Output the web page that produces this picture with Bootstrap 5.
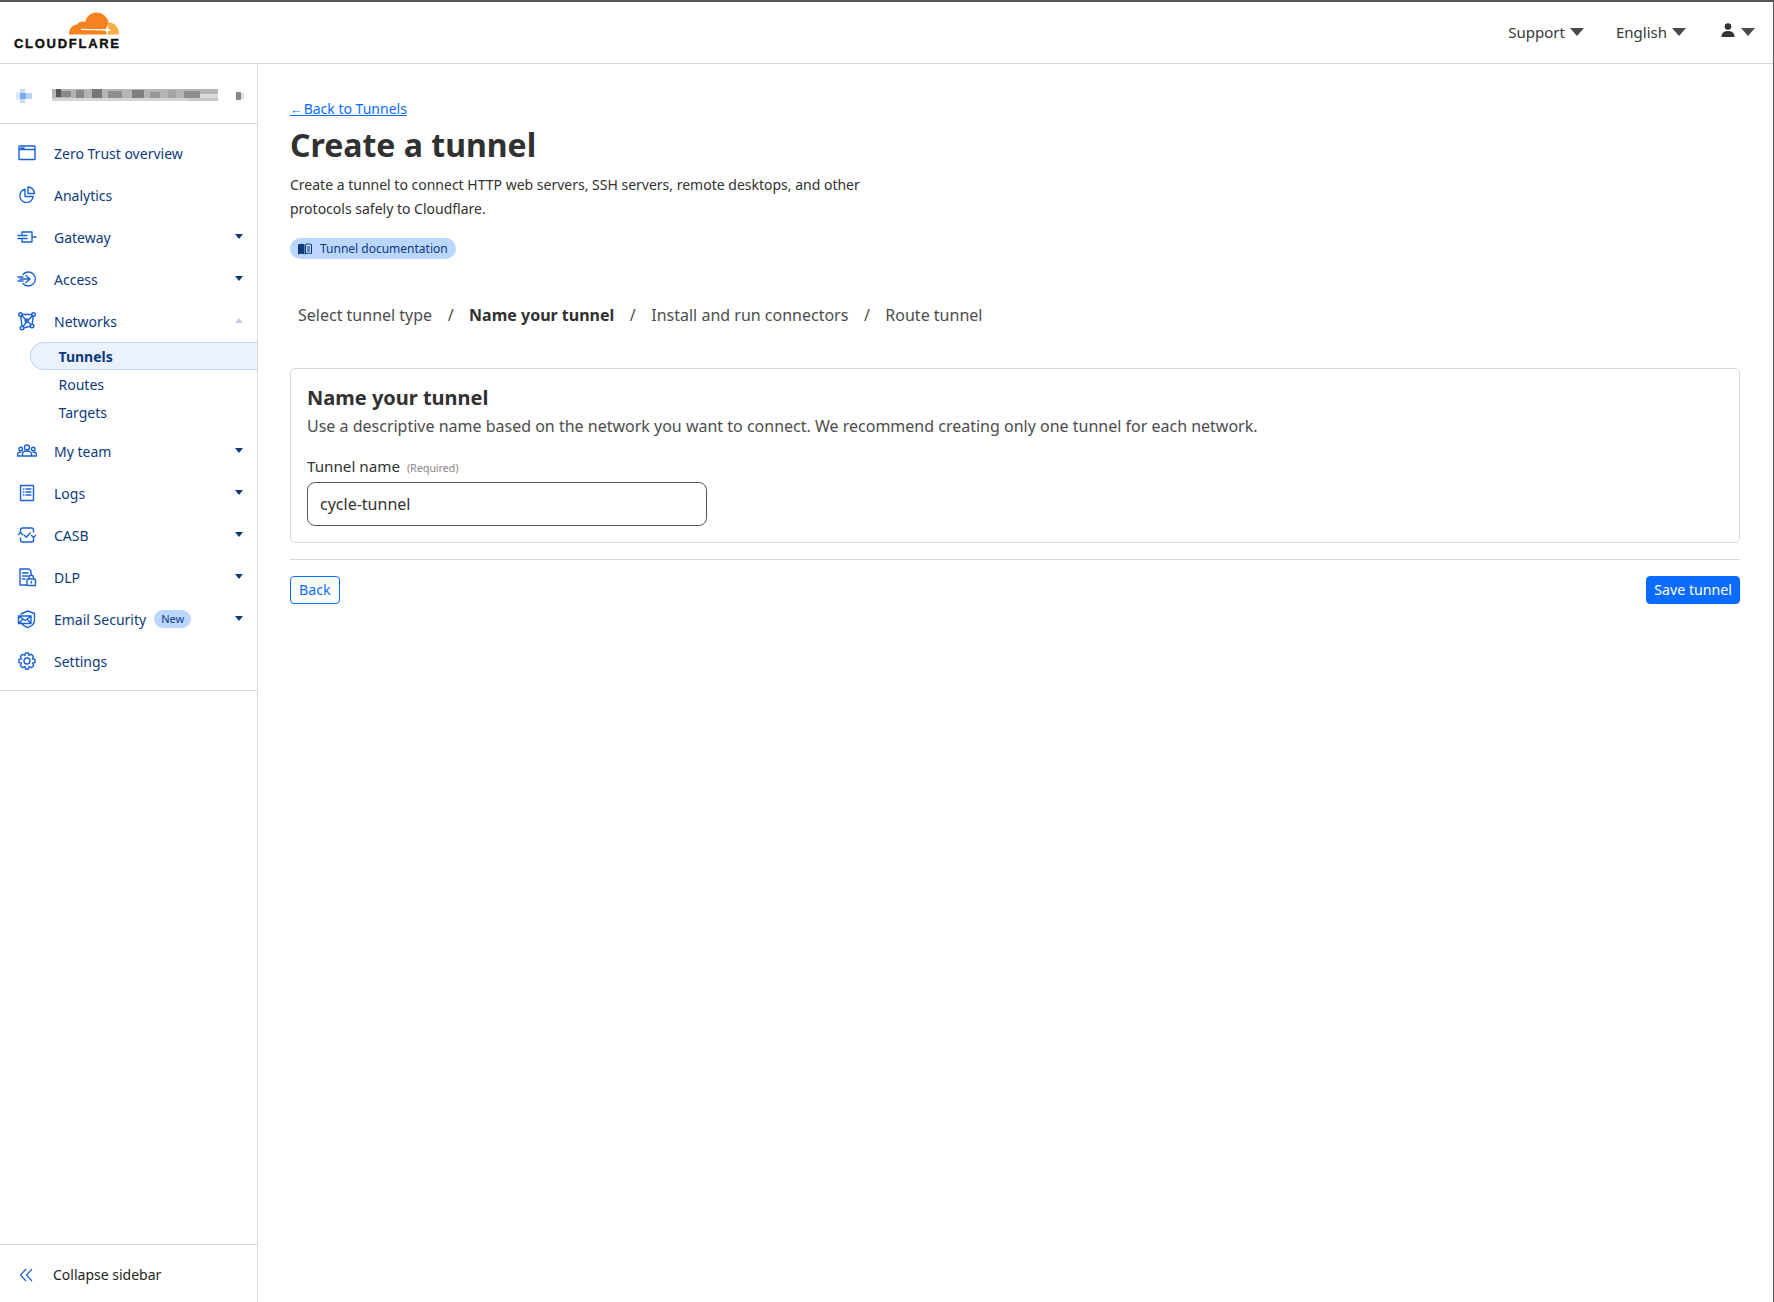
<!doctype html>
<html lang="en">

<head>
    <meta charset="utf-8">
    <meta name="viewport" content="width=device-width, initial-scale=1">
    <title>Create a tunnel</title>
    <link href="https://cdn.jsdelivr.net/npm/bootstrap@5.3.0/dist/css/bootstrap.min.css" rel="stylesheet">
    <style>
        html, body { height: 100%; }
        body {
            font-family: "Noto Sans", sans-serif;
            color: #313131;
            font-size: 16px;
            overflow: hidden;
        }

        .frame {
            height: 1302px;
            border-top: 2px solid #555;
            border-right: 1px solid #555;
        }

        .top-bar { height: 62px; border-bottom: 1px solid #d9d9d9; }
        .logo { margin-left: 14px; margin-top: -4px; }
        .logo text { font-family: "Liberation Sans", sans-serif; font-weight: 700; font-size: 13px; fill: #111; stroke: #111; stroke-width: 0.4; }

        .top-menu { font-size: 15px; color: #36393a; padding-right: 18px; gap: 32px; }
        .top-menu span.item { display: flex; align-items: center; gap: 5px; }
        .top-menu svg { margin-top: -5px; margin-left: 3px; margin-right: 1px; }
        .caret-lg { width: 0; height: 0; border-left: 7px solid transparent; border-right: 7px solid transparent; border-top: 8px solid #4a4a4a; display: inline-block; margin-top: -2px; }

        .sidebar { width: 258px; flex: 0 0 258px; border-right: 1px solid #d9d9d9; color: #0e3a7c; font-size: 14px; }
        .account { height: 60px; border-bottom: 1px solid #d9d9d9; padding: 4px 12px 0 16px; }
        .nav-group { padding-top: 8px; padding-bottom: 8px; border-bottom: 1px solid #d9d9d9; }
        .side-item { height: 42px; padding: 0 14px 0 17px; }
        .side-item svg.ico { width: 20px; height: 20px; flex: none; margin-right: 17px; fill: none; stroke: #1a62d6; stroke-width: 1.4; stroke-linecap: round; stroke-linejoin: round; }
        .caret { margin-left: auto; width: 0; height: 0; border-left: 4.5px solid transparent; border-right: 4.5px solid transparent; border-top: 5px solid #0e3a7c; margin-top: -2px; }
        .caret.up { border-top: 0; border-bottom: 5px solid #c4cfdd; }
        .new-badge { background: #bbd6ff; border-radius: 10px; font-size: 11px; line-height: 18px; padding: 0 7px; margin-left: 8px; }
        .sub-items { margin-bottom: 4px; }
        .sub-item { height: 28px; padding-left: 27.5px; margin-left: 30px; line-height: 27px; border: 1px solid transparent; border-right: 0; }
        .sub-item.active { background: #eaf2fe; border-color: #bbd6ff; border-radius: 14px 0 0 14px; font-weight: 700; }
        .collapse-row { height: 58px; border-top: 1px solid #d9d9d9; color: #1d1f20; padding-left: 19px; padding-top: 2px; }
        .collapse-row svg { margin-right: 20px; }

        .content { padding: 33px 33px 0 32px; }
        .back-link { font-size: 14px; color: #0a6cff; line-height: 24px; height: 24px; display: block; }
        .back-link span { font-size: 12.5px; line-height: 1; letter-spacing: -2.5px; }
        h1.page-title { font-size: 32px; font-weight: 700; line-height: 40px; margin: 4px 0 8px; color: #313131; }
        .intro { font-size: 14px; line-height: 24px; width: 600px; margin-bottom: 17px; }
        .doc-pill { background: #bbd6ff; color: #0e3a7c; font-size: 12px; line-height: 20px; height: 21px; border-radius: 11px; padding: 0 8px; width: 166px; gap: 8px; white-space: nowrap; }
        .doc-pill svg { flex: none; }
        .steps { padding-left: 8px; margin-top: 44px; font-size: 16px; line-height: 24px; color: #4d4d4d; gap: 15.5px; }
        .steps b { color: #313131; }
        .tunnel-card { margin-top: 41px; border: 1px solid #d9d9d9; border-radius: 5px; height: 175px; padding: 15px 16px 16px; }
        .tunnel-card h2 { font-size: 20px; font-weight: 700; line-height: 28px; margin: 0 0 2px; color: #313131; }
        .tunnel-card p { margin: 0; line-height: 24px; color: #4d4d4d; font-size: 16px; }
        .field-label { font-size: 15.2px; margin: 16px 0 2px; line-height: 24px; display: block; }
        .field-label small { font-size: 11px; color: #8a8a8a; margin-left: 3px; letter-spacing: -0.2px; }
        .name-input.form-control { width: 400px; height: 44px; border: 1px solid #555; border-radius: 8px; font-size: 16px; padding: 0 12px; color: #313131; }
        .rule { margin: 16px 0; border-top: 1px solid #d9d9d9; opacity: 1; }
        .act-btn.btn { height: 28px; font-size: 14.2px; padding: 0 7px; border-radius: 4px; line-height: 26px; }
        .btn-back.btn { color: #0a6cff; border: 1px solid #0a6cff; background: #fff; padding: 0 8px; }
        .btn-save.btn { color: #fff; background: #0a6cff; border: 1px solid #0a6cff; }
    </style>
</head>

<body>
    <div class="frame d-flex flex-column">
        <div class="top-bar d-flex justify-content-between align-items-center flex-none">
            <svg class="logo" width="108" height="40" viewBox="14 10 108 40">
                <g transform="translate(0 -1)">
                    <path fill="#f6821f" d="M69 34.500C69 29 72 25 77 24.500C79 21.800 82 21 85 22C87 16 91 12.500 96 12.500C103 12.500 107.500 17 108.500 22.500L106.500 34.500Z"/>
                    <path fill="#fbad41" d="M108.500 22.500C114.500 22.500 119 27 119 34.500H107Z"/>
                    <path fill="none" stroke="#fff" stroke-width="1.2" d="M81 29.300L105 29.800"/>
                    <path fill="#fff" d="M101 30L106 29L107.500 24.500L108.500 29L112 30.500L108.300 31L107 35L106 31Z"/>
                </g>
                <text x="14" y="47" textLength="105" lengthAdjust="spacing">CLOUDFLARE</text>
            </svg>
            <div class="top-menu d-flex align-items-center">
                <span class="item">Support <i class="caret-lg"></i></span>
                <span class="item">English <i class="caret-lg"></i></span>
                <span class="item">
                    <svg width="14" height="14" viewBox="0 0 14 14" fill="#333"><circle cx="7" cy="3.500" r="3.300"/><path d="M0.500 14C0.500 10 3 8 7 8S13.500 10 13.500 14Z"/></svg>
                    <i class="caret-lg"></i>
                </span>
            </div>
        </div>

        <div class="d-flex flex-grow-1">
            <aside class="sidebar d-flex flex-column">
                <div class="account d-flex align-items-center">
                    <svg width="229" height="16" viewBox="0 0 229 16">
                        <rect x="0" y="4" width="5" height="8" fill="#dce8fb"/><rect x="4" y="1" width="5" height="14" fill="#c6dafa"/><rect x="4" y="5" width="6" height="6" fill="#7fa9ea"/><rect x="10" y="5" width="6" height="6" fill="#bcd4f8"/>
                        <rect x="36" y="1" width="166" height="9" fill="#b5b5b5"/><rect x="36" y="10" width="136" height="3" fill="#d5d5d5"/>
                        <rect x="40" y="1" width="5" height="8" fill="#555"/><rect x="45" y="3" width="10" height="6" fill="#888"/><rect x="60" y="2" width="8" height="8" fill="#8a8a8a"/><rect x="76" y="1" width="10" height="9" fill="#777"/><rect x="92" y="3" width="14" height="7" fill="#8e8e8e"/>
                        <rect x="116" y="2" width="12" height="8" fill="#808080"/><rect x="134" y="4" width="10" height="6" fill="#999"/><rect x="152" y="2" width="8" height="8" fill="#a5a5a5"/><rect x="168" y="3" width="16" height="7" fill="#8d8d8d"/><rect x="184" y="6" width="18" height="5" fill="#dcdcdc"/><rect x="172" y="10" width="30" height="3" fill="#c8c8c8"/>
                        <rect x="220" y="4" width="5" height="8" fill="#888"/><rect x="225" y="5" width="3" height="6" fill="#ddd"/>
                    </svg>
                </div>

                <div class="nav-group">
                    <div class="side-item d-flex align-items-center">
                        <svg class="ico" viewBox="0 0 20 20"><rect x="2" y="3" width="16" height="13.500" rx="0.500"/><path d="M2 6.500h16M4 5h1M6 5h1"/></svg>
                        Zero Trust overview
                    </div>
                    <div class="side-item d-flex align-items-center">
                        <svg class="ico" viewBox="0 0 20 20"><path d="M8 4.200A6.700 6.700 0 1 0 16.200 11.500H8Z"/><path d="M11 2A6.500 6.500 0 0 1 17.500 8.500H11Z"/></svg>
                        Analytics
                    </div>
                    <div class="side-item d-flex align-items-center">
                        <svg class="ico" viewBox="0 0 20 20"><path d="M5 5H15V15H5V13M5 7V5M1 8.500H10M1 11.500H10M15 10H19"/></svg>
                        Gateway <span class="caret"></span>
                    </div>
                    <div class="side-item d-flex align-items-center">
                        <svg class="ico" viewBox="0 0 20 20"><path d="M6 5.500A7 7 0 1 1 6 14.500M1 8H6M1 12H6M9 6.500L13 10L9 13.500M13 10H3"/></svg>
                        Access <span class="caret"></span>
                    </div>
                    <div class="side-item d-flex align-items-center">
                        <svg class="ico" viewBox="0 0 20 20"><circle cx="3.500" cy="3.500" r="1.800"/><circle cx="16.500" cy="3.500" r="1.800"/><circle cx="5" cy="17" r="1.800"/><circle cx="15" cy="15" r="1.800"/><circle cx="9.500" cy="9.500" r="1.500"/><path d="M5.300 3.500H14.700M3.800 5.300L5 15.200M6.800 17L13.200 15.300M16.200 5.300L15.200 13.200M4.800 4.800L14 13.700M15.300 4.800L6 15.500"/></svg>
                        Networks <span class="caret up"></span>
                    </div>
                    <div class="sub-items">
                        <div class="sub-item active">Tunnels</div>
                        <div class="sub-item">Routes</div>
                        <div class="sub-item">Targets</div>
                    </div>
                    <div class="side-item d-flex align-items-center">
                        <svg class="ico" viewBox="0 0 20 20"><circle cx="10" cy="6.500" r="2.500"/><circle cx="3.700" cy="8" r="1.800"/><circle cx="16.300" cy="8" r="1.800"/><path d="M5.500 15V13C5.500 11 7.500 10 10 10S14.500 11 14.500 13V15ZM0.500 15V13.500C0.500 12 2 11 4 11M19.500 15V13.500C19.500 12 18 11 16 11M0.500 15H19.500"/></svg>
                        My team <span class="caret"></span>
                    </div>
                    <div class="side-item d-flex align-items-center">
                        <svg class="ico" viewBox="0 0 20 20"><rect x="3.500" y="2.500" width="13" height="15" rx="0.500"/><path d="M6.500 6H7M9 6H14M6.500 9H7M9 9H14M6.500 12H7M9 12H14"/></svg>
                        Logs <span class="caret"></span>
                    </div>
                    <div class="side-item d-flex align-items-center">
                        <svg class="ico" viewBox="0 0 20 20"><path d="M3.500 8V5C3.500 3.500 4.500 3 5.500 3H14.500C15.500 3 16.500 3.500 16.500 5V7M16.500 12V15.500C16.500 16.500 15.500 17 14.500 17H5.500C4.500 17 3.500 16.500 3.500 15.500V13M1.500 9.500L3.500 7.500L5.500 9.500M14.500 10.500L16.500 12.500L18.500 10.500M7 10L9.300 12.300L13.200 8"/></svg>
                        CASB <span class="caret"></span>
                    </div>
                    <div class="side-item d-flex align-items-center">
                        <svg class="ico" viewBox="0 0 20 20"><path d="M10 18H3V2H12L14 4V8M5.500 6H11M5.500 9H11M5.500 12H8"/><rect x="10" y="12" width="8.500" height="6.500" rx="0.800"/><path d="M12 12V10.500A2.200 2.200 0 0 1 16.500 10.500V12M14.200 14.500V16"/></svg>
                        DLP <span class="caret"></span>
                    </div>
                    <div class="side-item d-flex align-items-center">
                        <svg class="ico" viewBox="0 0 20 20"><path d="M4 5L10.500 2L17.500 4.500V11C17.500 15 14 17.500 10.500 18.500C8 17.500 5.500 16 4.500 14M1.500 7H14V14.500H1.500ZM1.500 7L8 11.500L14 7M1.500 14.500L6 10M14 14.500L10 10"/></svg>
                        Email Security <span class="new-badge">New</span> <span class="caret"></span>
                    </div>
                    <div class="side-item d-flex align-items-center">
                        <svg class="ico" viewBox="0 0 20 20"><circle cx="10" cy="10" r="3"/><path d="M8.500 2H11.500L12 4.500L14.200 3.300L16.500 5.500L15.300 7.800L18 8.500V11.500L15.500 12.200L16.700 14.500L14.500 16.700L12.200 15.500L11.500 18H8.500L7.800 15.500L5.500 16.700L3.300 14.500L4.500 12.200L2 11.500V8.500L4.500 7.800L3.300 5.500L5.500 3.300L7.800 4.500Z"/></svg>
                        Settings
                    </div>
                </div>

                <div class="collapse-row d-flex align-items-center mt-auto">
                    <svg width="14" height="14" viewBox="0 0 14 14" fill="none" stroke="#1a62d6" stroke-width="1.200"><path d="M7 1L1.500 7L7 13M13 1L7.500 7L13 13"/></svg>
                    Collapse sidebar
                </div>
            </aside>

            <main class="content flex-grow-1">
                <a class="back-link" href="#"><span>&#8592;</span> Back to Tunnels</a>
                <h1 class="page-title">Create a tunnel</h1>
                <p class="intro">Create a tunnel to connect HTTP web servers, SSH servers, remote desktops, and other protocols safely to Cloudflare.</p>
                <div class="doc-pill d-flex align-items-center">
                    <svg width="14" height="12" viewBox="0 0 14 12"><path fill="#0e3a7c" d="M0 1.500C2 0.500 5 0.500 6.500 1.500V11.500C5 10.500 2 10.500 0 11.500Z"/><path fill="none" stroke="#0e3a7c" d="M7.500 1.500C9 0.800 11.500 0.800 13.500 1.500V10.500C11.500 10 9 10 7.500 11ZM9 4H12M9 6H12M9 8H12"/></svg>
                    Tunnel documentation
                </div>
                <div class="steps d-flex">
                    <span>Select tunnel type</span><span>/</span><b>Name your tunnel</b><span>/</span><span>Install and run connectors</span><span>/</span><span>Route tunnel</span>
                </div>
                <div class="tunnel-card">
                    <h2>Name your tunnel</h2>
                    <p>Use a descriptive name based on the network you want to connect. We recommend creating only one tunnel for each network.</p>
                    <label class="field-label" for="tunnelName">Tunnel name <small>(Required)</small></label>
                    <input class="form-control name-input" id="tunnelName" value="cycle-tunnel">
                </div>
                <hr class="rule">
                <div class="d-flex justify-content-between">
                    <button class="btn act-btn btn-back">Back</button>
                    <button class="btn act-btn btn-save">Save tunnel</button>
                </div>
            </main>
        </div>
    </div>

    <script src="https://cdn.jsdelivr.net/npm/bootstrap@5.3.0/dist/js/bootstrap.bundle.min.js"></script>
</body>

</html>
